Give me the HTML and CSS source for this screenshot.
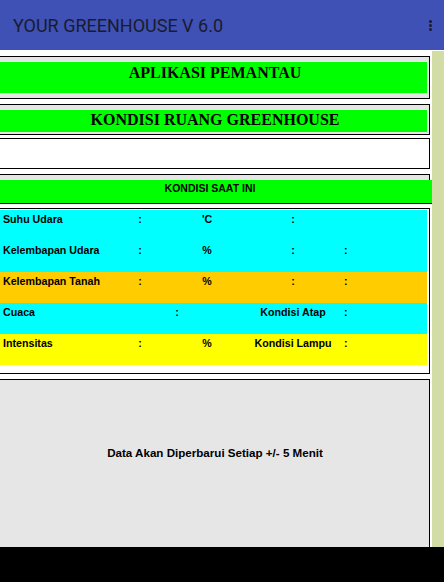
FILE: index.html
```html
<!DOCTYPE html>
<html lang="id">
<head>
<meta charset="utf-8">
<title>Your Greenhouse</title>
<link rel="stylesheet" href="styles.css">
</head>
<body>
<div class="appbar">
  <h1>YOUR GREENHOUSE V 6.0</h1>
  <div class="menu"><span></span><span></span><span></span></div>
</div>

<div class="screen">
  <div class="page">
    <div class="box title">
      <div class="banner">APLIKASI PEMANTAU</div>
    </div>
    <div class="box subtitle">
      <div class="banner">KONDISI RUANG GREENHOUSE</div>
    </div>
    <div class="box empty"></div>

    <div class="now">
      <div class="band">KONDISI SAAT INI</div>
    </div>

    <div class="readings">
      <div class="row cyan">
        <div class="cell label">Suhu Udara</div>
        <div class="cell mid">:</div>
        <div class="cell mid">'C</div>
        <div class="cell mid">:</div>
        <div class="cell end"></div>
      </div>
      <div class="row cyan">
        <div class="cell label">Kelembapan Udara</div>
        <div class="cell mid">:</div>
        <div class="cell mid">%</div>
        <div class="cell mid">:</div>
        <div class="cell end">:</div>
      </div>
      <div class="row orange">
        <div class="cell label">Kelembapan Tanah</div>
        <div class="cell mid">:</div>
        <div class="cell mid">%</div>
        <div class="cell mid">:</div>
        <div class="cell end">:</div>
      </div>
      <div class="row cyan">
        <div class="cell label">Cuaca</div>
        <div class="cell mid wide">:</div>
        <div class="cell mid">Kondisi Atap</div>
        <div class="cell end">:</div>
      </div>
      <div class="row yellow">
        <div class="cell label">Intensitas</div>
        <div class="cell mid">:</div>
        <div class="cell mid">%</div>
        <div class="cell mid">Kondisi Lampu</div>
        <div class="cell end">:</div>
      </div>
    </div>

    <div class="notice">
      <p>Data Akan Diperbarui Setiap +/- 5 Menit</p>
    </div>
  </div>
  <div class="rail"></div>
</div>

<div class="navbar"></div>
</body>
</html>
```

FILE: styles.css
```css
* { box-sizing: border-box; }

body {
  margin: 0;
  width: 444px;
  height: 582px;
  overflow: hidden;
  font-family: "Liberation Sans", Arial, sans-serif;
  color: #000;
  background: #fff;
}

/* app bar */
.appbar {
  height: 50px;
  background-color: #3f51b5;
  display: flex;
  align-items: center;
  justify-content: space-between;
  padding: 0 12px 0 13px;
}
.appbar h1 {
  margin: 0;
  font-family: Roboto, "Liberation Sans", sans-serif;
  font-weight: 400;
  font-size: 18px;
  color: #191b30;
}
.menu {
  display: flex;
  flex-direction: column;
  gap: 1px;
}
.menu span {
  width: 3px;
  height: 3px;
  border-radius: 50%;
  background: #191b30;
}

/* content */
.screen {
  display: flex;
  height: 497px;
}
.page {
  flex: 0 0 432px;
  overflow: hidden;
  background: #fff;
  padding-top: 6px;
}
.rail {
  flex: 1;
  margin-top: 1px;
  background-color: #d2dda6;
}

.box {
  margin: 0 2px 0 -3px;
  border: 1px solid #000;
  padding: 5px 2px;
  background-color: #e6e6e6;
}
.banner {
  background-color: #00ff00;
  font-family: "Liberation Serif", "Times New Roman", serif;
  font-weight: bold;
  font-size: 16px;
  line-height: 18px;
  text-align: center;
  padding-left: 3px;
}
.title .banner { height: 31px; padding-top: 2px; }
.subtitle { margin-top: 5px; padding-bottom: 2px; }
.subtitle .banner { height: 22px; padding-top: 1px; }
.empty {
  margin-top: 3px;
  height: 31px;
  padding: 0;
  background: #fff;
}

.now {
  margin: 5px 2px 0 -3px;
  border-top: 1px solid #000;
  border-right: 1px solid #000;
  padding-top: 5px;
  background-color: #e6e6e6;
}
.band {
  margin-right: -3px;
  height: 24px;
  padding: 2px 9px 0 0;
  background-color: #00ff00;
  border-bottom: 1px solid #000;
  font-weight: bold;
  font-size: 10.5px;
  line-height: 13px;
  text-align: center;
}

.readings {
  margin: 4px 2px 0 -3px;
  border: 1px solid #000;
  padding: 1px 2px 8px;
  background: #fff;
}
.row {
  display: grid;
  grid-template-columns: 110px 60px 74px 98px 1fr;
  height: 31px;
  font-weight: bold;
  font-size: 10.67px;
  line-height: 13px;
}
.cyan { background-color: #00ffff; }
.orange { background-color: #ffcc00; }
.yellow { background-color: #ffff00; }
.cell { padding-top: 3px; white-space: nowrap; }
.label { padding-left: 3px; }
.mid { text-align: center; }
.wide { grid-column: span 2; }
.end { padding-left: 2px; }

.notice {
  margin: 5px 2px 0 -3px;
  border: 1px solid #000;
  height: 220px;
  background-color: #e6e6e6;
  padding-top: 66px;
}
.notice p {
  margin: 0;
  padding-left: 3px;
  text-align: center;
  font-weight: bold;
  font-size: 11.6px;
  line-height: 14px;
}

.navbar {
  height: 35px;
  background: #000;
}
```
